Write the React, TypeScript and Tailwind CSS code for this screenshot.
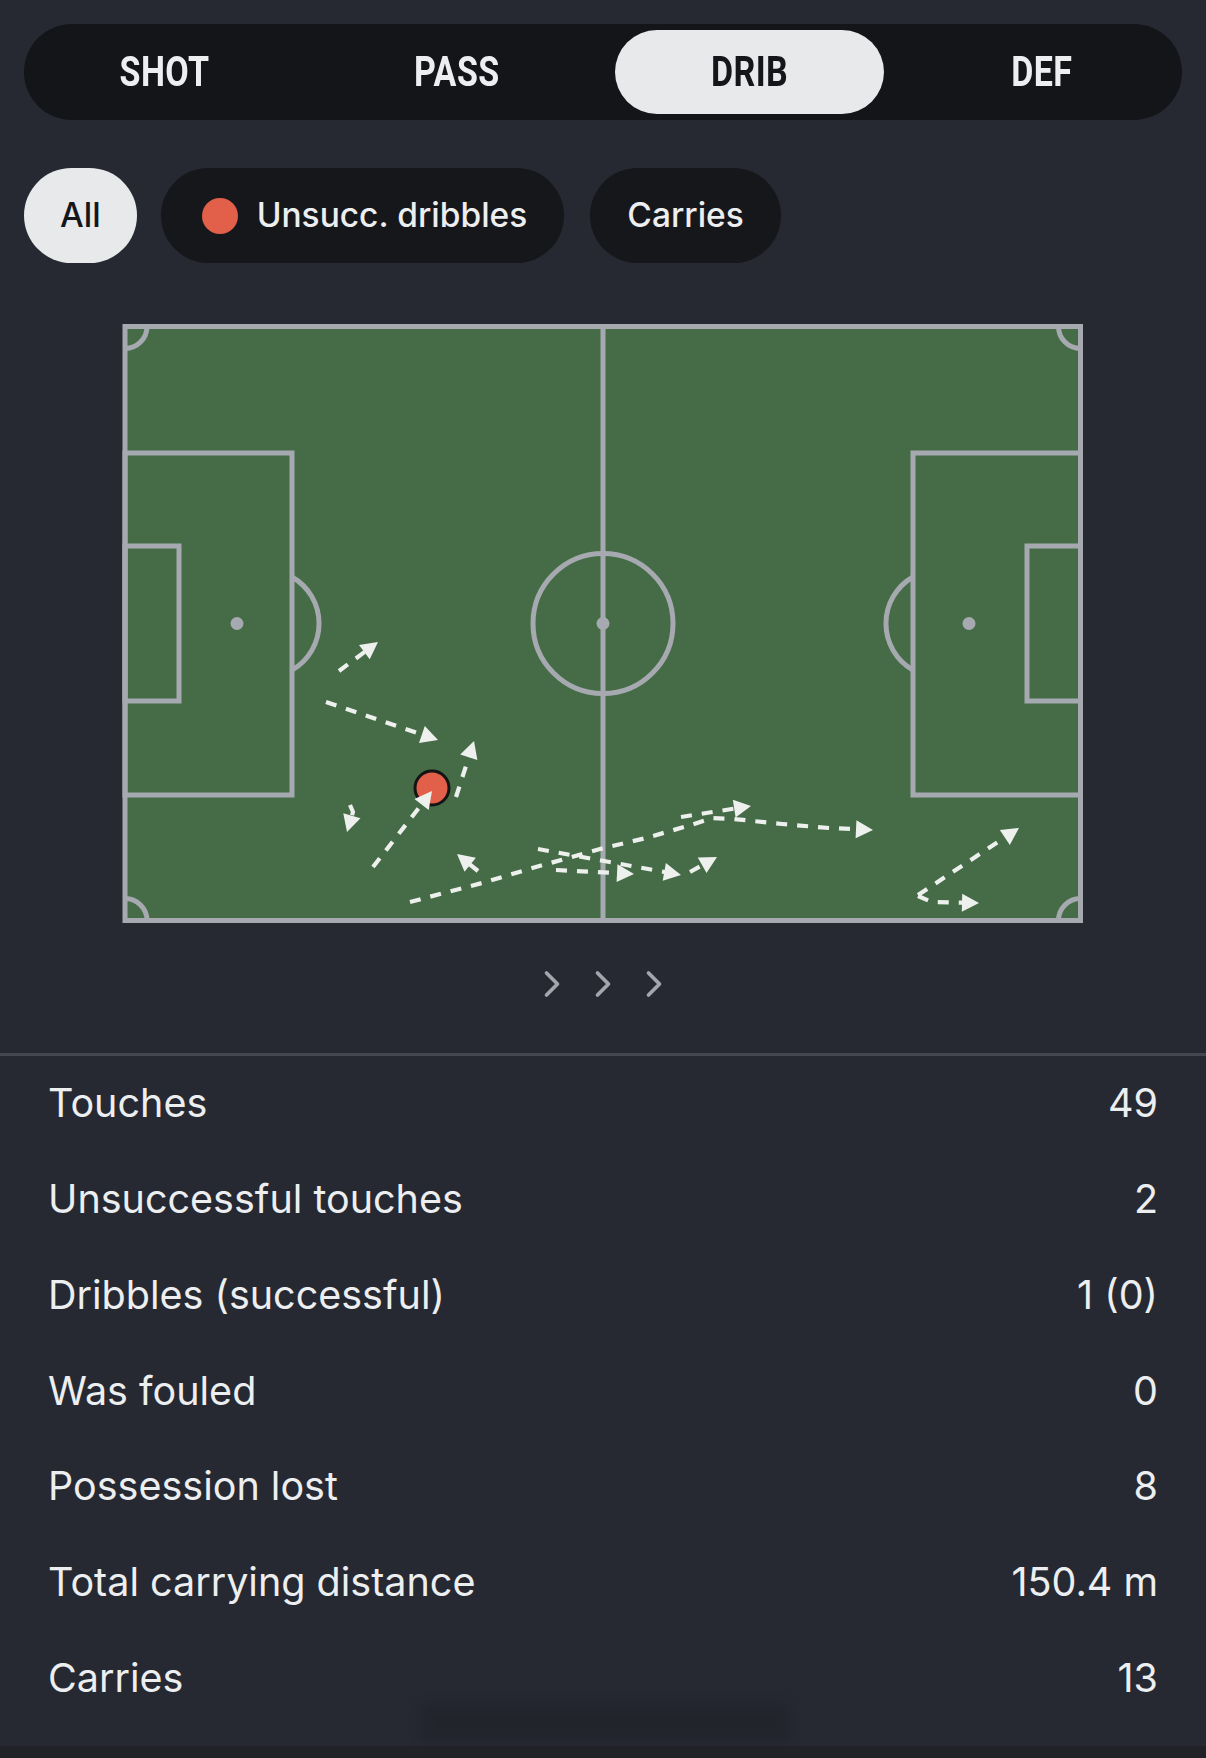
import React from "react";
import { ChevronRight } from "lucide-react";

type Pt = [number, number];

const ARROW = "#eef0ed";
const LINE = "#a6aab0";

function Arrow({ pts }: { pts: Pt[] }) {
  const n = pts.length;
  const [x2, y2] = pts[n - 1];
  const [x1, y1] = pts[n - 2];
  const dx = x2 - x1;
  const dy = y2 - y1;
  const L = Math.hypot(dx, dy);
  const ux = dx / L;
  const uy = dy / L;
  const len = 17;
  const hw = 9;
  const bx = x2 - ux * len;
  const by = y2 - uy * len;
  const line = [...pts.slice(0, n - 1), [bx + ux * 2, by + uy * 2] as Pt];
  const tri = `${x2},${y2} ${bx - uy * hw},${by + ux * hw} ${bx + uy * hw},${by - ux * hw}`;
  return (
    <g>
      <polyline
        points={line.map((p) => p.join(",")).join(" ")}
        fill="none"
        stroke={ARROW}
        strokeWidth={4.2}
        strokeDasharray="11 10"
        strokeLinejoin="round"
      />
      <polygon points={tri} fill={ARROW} />
    </g>
  );
}

const arrows: Pt[][] = [
  [[339, 671], [378, 642]],
  [[326, 702], [438, 740]],
  [[456, 797], [474, 741]],
  [[350, 805], [353, 812], [347, 832]],
  [[478, 871], [457, 854]],
  [
    [410, 902], [482, 883], [529, 869], [600, 849], [646, 838], [691, 825],
    [712, 818], [734, 819], [782, 824], [829, 828], [873, 830],
  ],
  [[681, 817], [751, 806]],
  [[538, 849], [681, 875]],
  [[556, 870], [634, 874]],
  [[690, 872], [717, 857]],
  [[918, 895], [1019, 828]],
  [[918, 896], [932, 902], [979, 903]],
];

function Pitch() {
  return (
    <svg width={966} height={608} viewBox="120 320 966 608" className="block">
      <rect x={125} y={326.5} width={955.5} height={594} fill="#456c47" stroke={LINE} strokeWidth={5} />
      <g fill="none" stroke={LINE} strokeWidth={5}>
        <line x1={603} y1={326.5} x2={603} y2={920.5} />
        <circle cx={603} cy={623.5} r={70} />
        <rect x={125} y={453} width={167} height={342} />
        <rect x={125} y={546} width={54} height={155} />
        <path d="M 292 577 A 53.5 53.5 0 0 1 292 670" />
        <rect x={913} y={453} width={167.5} height={342} />
        <rect x={1027} y={546} width={53.5} height={155} />
        <path d="M 913 577 A 53.5 53.5 0 0 0 913 670" />
        <path d="M 125 348.5 A 22 22 0 0 0 147 326.5" />
        <path d="M 1058.5 326.5 A 22 22 0 0 0 1080.5 348.5" />
        <path d="M 147 920.5 A 22 22 0 0 0 125 898.5" />
        <path d="M 1080.5 898.5 A 22 22 0 0 0 1058.5 920.5" />
      </g>
      <g fill={LINE}>
        <circle cx={603} cy={623.5} r={6.5} />
        <circle cx={237} cy={623.5} r={6.5} />
        <circle cx={969} cy={623.5} r={6.5} />
      </g>
      {arrows.map((a, i) => (
        <Arrow key={i} pts={a} />
      ))}
      <circle cx={432} cy={788} r={17} fill="#e2604a" stroke="#141414" strokeWidth={3} />
      <Arrow pts={[[373, 867], [380, 858], [432, 791]]} />
    </svg>
  );
}

const tabs = ["SHOT", "PASS", "DRIB", "DEF"];

const stats: [string, string][] = [
  ["Touches", "49"],
  ["Unsuccessful touches", "2"],
  ["Dribbles (successful)", "1 (0)"],
  ["Was fouled", "0"],
  ["Possession lost", "8"],
  ["Total carrying distance", "150.4 m"],
  ["Carries", "13"],
];

export default function App() {
  return (
    <div
      className="relative w-[1206px] h-[1758px] overflow-hidden bg-[#262932] text-[#eceef0]"
      style={{ fontFamily: "Inter, 'Noto Sans', sans-serif" }}
    >
      <div className="pt-[24px] px-[24px]">
        <div className="flex justify-between items-center h-[96px] px-[6px] rounded-[48px] bg-[#141519]">
          {tabs.map((t) => (
            <div
              key={t}
              className={
                t === "DRIB"
                  ? "w-[269px] h-[84px] rounded-[42px] bg-[#e8e9eb] text-[#15161a] flex items-center justify-center"
                  : "w-[269px] h-[84px] rounded-[42px] text-[#eceef0] flex items-center justify-center"
              }
            >
              <span
                className="inline-block scale-x-[0.81] text-[42px] font-bold leading-none tracking-[0.5px]"
                style={{ fontFamily: "Roboto, 'Liberation Sans', sans-serif" }}
              >
                {t}
              </span>
            </div>
          ))}
        </div>

        <div className="flex items-center gap-[24px] mt-[48px]">
          <div className="h-[95px] px-[36px] rounded-full bg-[#e8e9eb] text-[#15161a] flex items-center text-[33.5px] font-medium">
            All
          </div>
          <div className="h-[95px] pl-[41px] pr-[37px] rounded-full bg-[#16171b] flex items-center gap-[19px] text-[33.5px] font-medium">
            <span className="w-[36px] h-[36px] rounded-full bg-[#e2604a] block" />
            Unsucc. dribbles
          </div>
          <div className="h-[95px] px-[37px] rounded-full bg-[#16171b] flex items-center text-[33.5px] font-medium ml-[2px]">
            Carries
          </div>
        </div>
      </div>

      <div className="flex justify-center mt-[57px]">
        <Pitch />
      </div>

      <div className="flex justify-center items-center gap-[7px] mt-[34px] text-[#a3a6ad]">
        <ChevronRight size={44} strokeWidth={2} />
        <ChevronRight size={44} strokeWidth={2} />
        <ChevronRight size={44} strokeWidth={2} />
      </div>

      <div className="mt-[47px] h-[3px] bg-[#44474f]" />

      <div className="px-[48px]">
        {stats.map(([k, v]) => (
          <div key={k} className="h-[95.8px] flex items-center justify-between text-[39.5px] leading-none">
            <span>{k}</span>
            <span>{v}</span>
          </div>
        ))}
      </div>

      <div className="absolute left-[420px] top-[1702px] w-[370px] h-[40px] rounded-[6px] bg-[#1d1f25] opacity-40 blur-[6px]" />
      <div className="absolute left-0 right-0 bottom-0 h-[12px] bg-[#202228]" />
    </div>
  );
}
